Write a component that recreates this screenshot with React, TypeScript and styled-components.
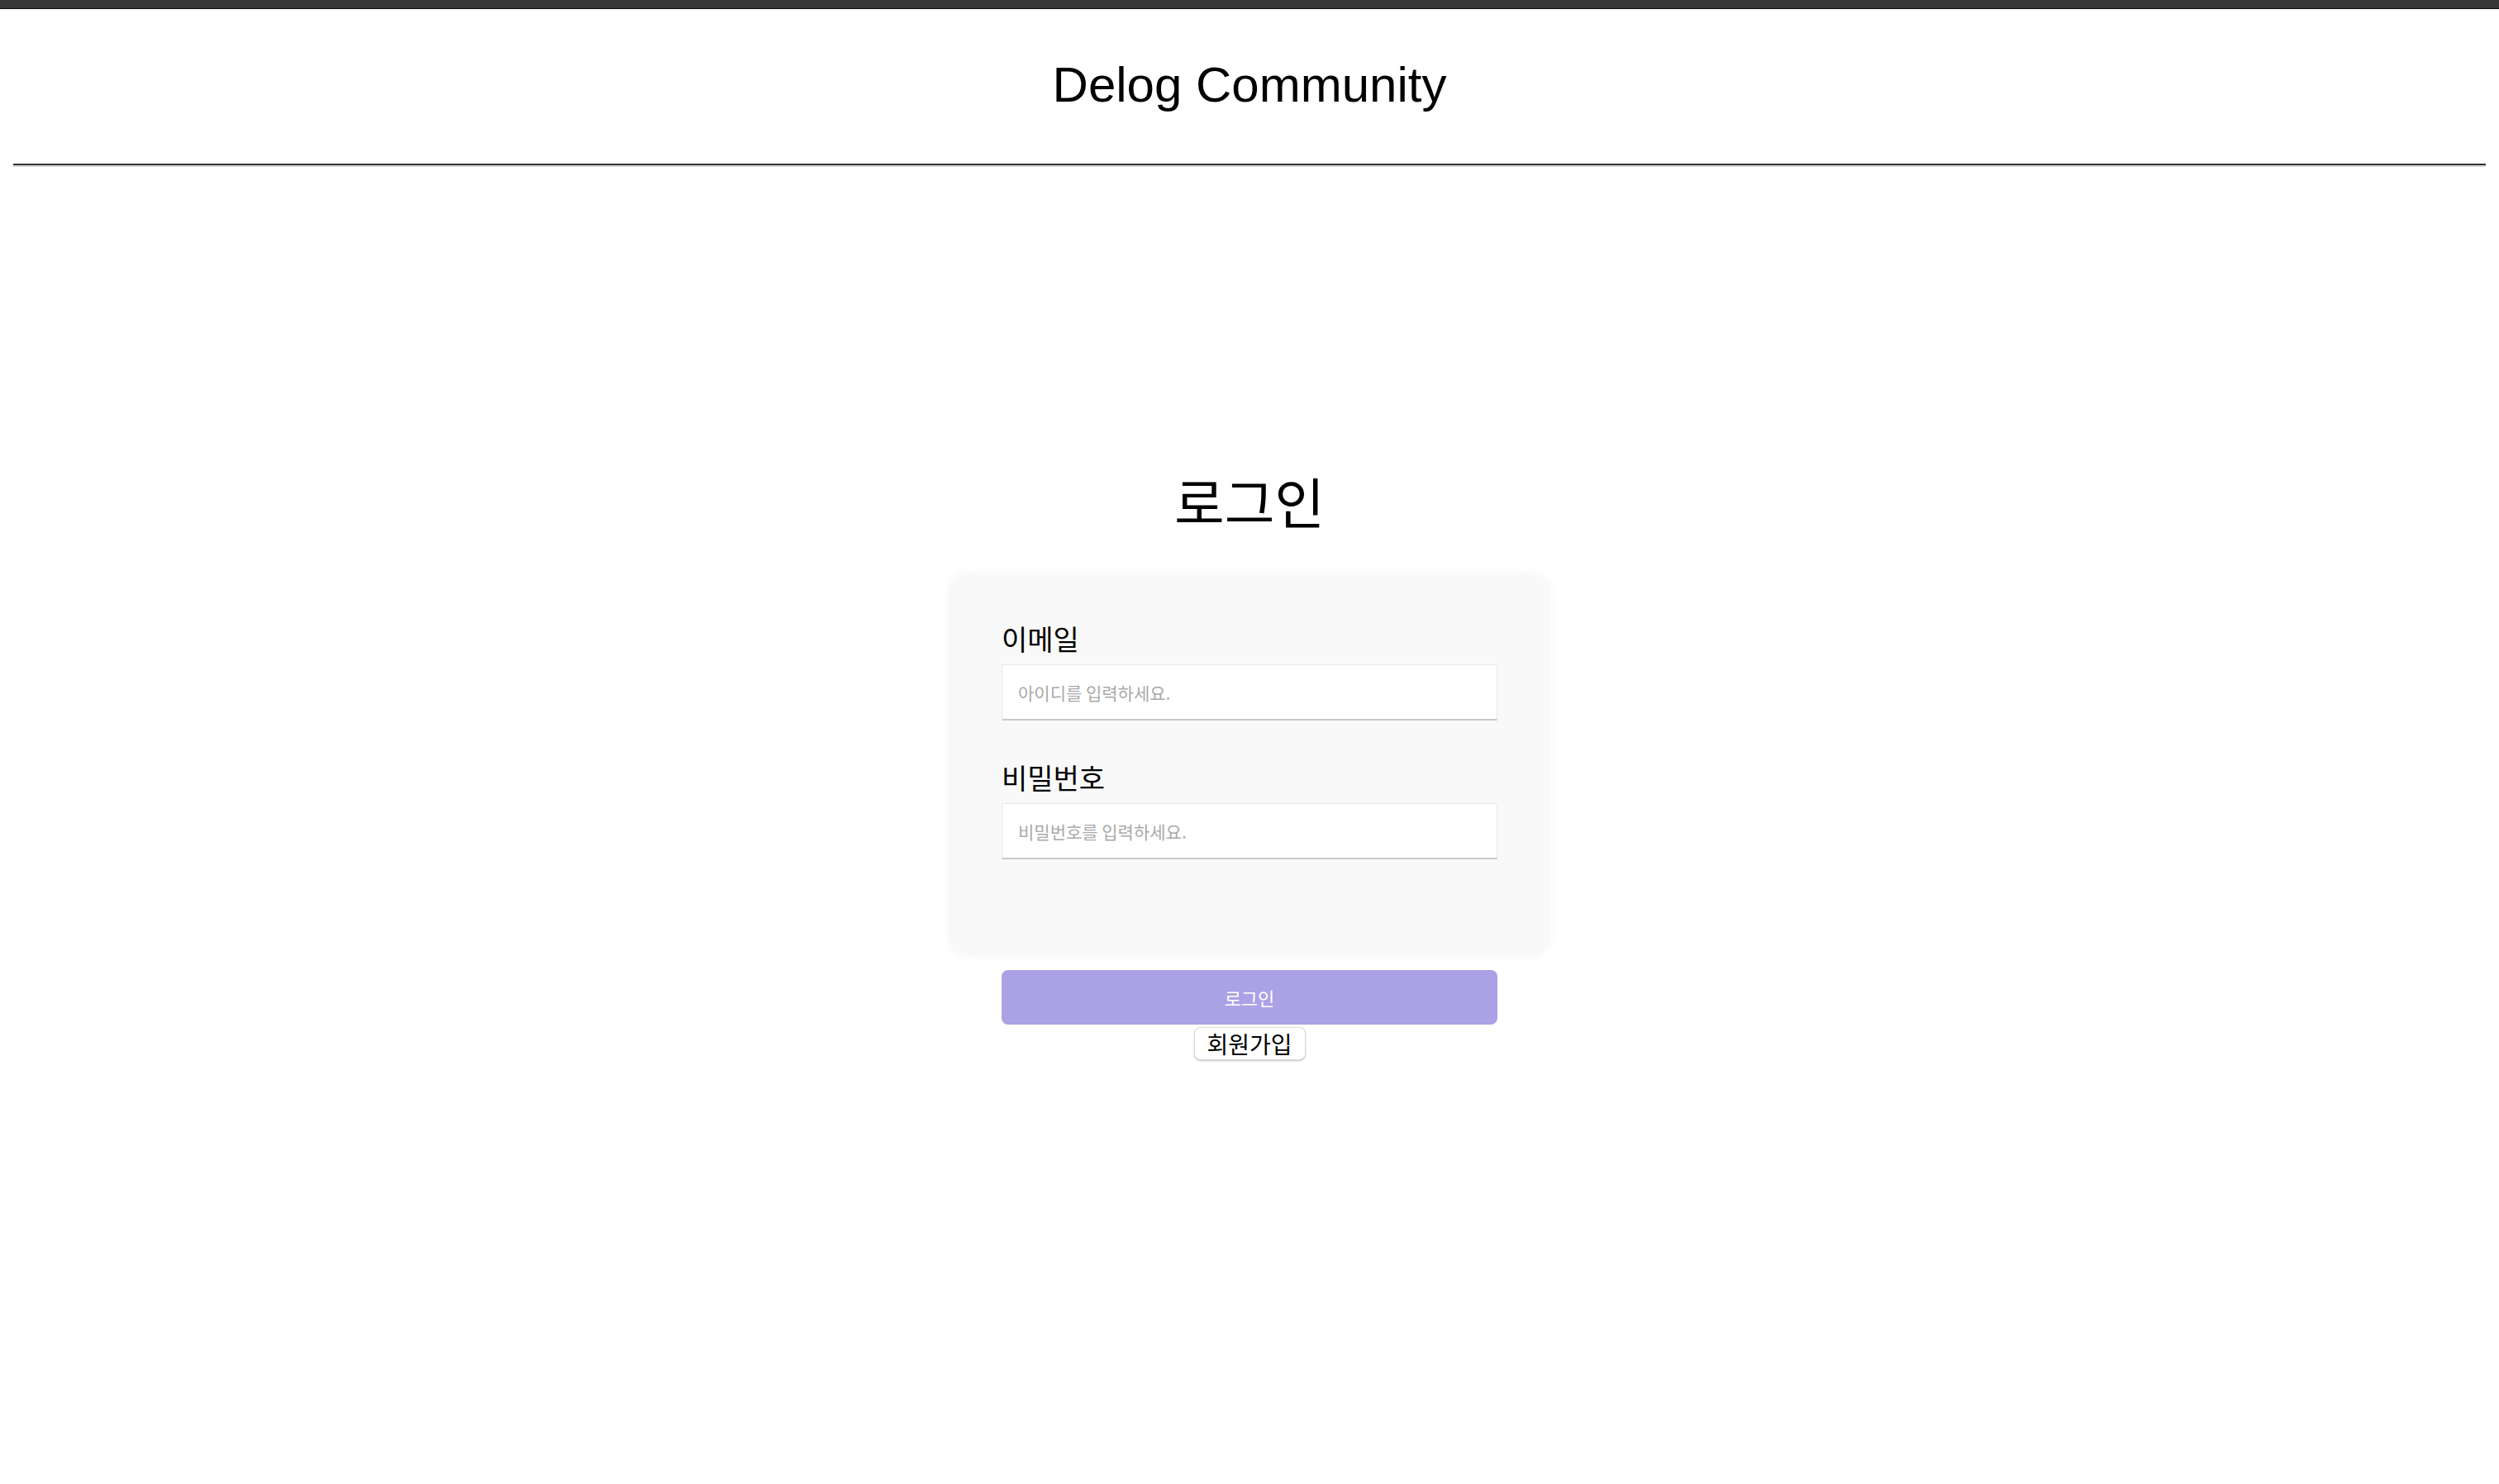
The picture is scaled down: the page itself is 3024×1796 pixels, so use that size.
import React from "react";
import styled, { createGlobalStyle } from "styled-components";

const GlobalStyle = createGlobalStyle`
  html, body {
    margin: 0;
    padding: 0;
    background: #ffffff;
  }
  body {
    font-family: "Noto Sans CJK KR", "Noto Sans", sans-serif;
    color: #000;
  }
  * { box-sizing: border-box; }
`;

const Page = styled.div`
  display: flex;
  flex-direction: column;
  min-height: 1796px;
`;

const TopBar = styled.div`
  height: 11px;
  background: #363636;
  border-bottom: 1px solid #111111;
`;

const Header = styled.header`
  display: flex;
  justify-content: center;
  margin-top: 57px;
`;

const SiteTitle = styled.h1`
  margin: 0;
  font-family: "Liberation Sans", Arial, sans-serif;
  font-weight: 400;
  font-size: 60px;
  line-height: 70px;
  color: #000;
`;

const Divider = styled.hr`
  height: 0;
  margin: 60px 16px 0;
  border: none;
  border-top: 2px solid #333333;
  border-bottom: 2px solid #d4d4d4;
`;

const Main = styled.main`
  display: flex;
  flex-direction: column;
  align-items: center;
  padding-top: 365px;
`;

const PageTitle = styled.h2`
  margin: 0;
  font-family: "Noto Sans CJK KR", sans-serif;
  font-weight: 400;
  font-size: 66px;
  line-height: 76px;
  color: #000;
`;

const Card = styled.form`
  width: 720px;
  margin-top: 55px;
  padding: 57px 60px 113px;
  background: #f9f9f9;
  border-radius: 18px;
  box-shadow: 0 0 16px rgba(0, 0, 0, 0.07);
  display: flex;
  flex-direction: column;
  gap: 51px;
`;

const Field = styled.div`
  display: flex;
  flex-direction: column;
  gap: 13px;
`;

const Label = styled.label`
  font-family: "Noto Sans CJK KR", sans-serif;
  font-size: 34px;
  line-height: 36px;
  color: #000;
`;

const TextInput = styled.input`
  width: 600px;
  height: 68px;
  padding: 0 19px;
  background: #ffffff;
  border: 1px solid #e8e8e8;
  border-bottom: 2px solid #c9c9c9;
  border-radius: 0;
  outline: none;
  font-family: "Noto Sans CJK KR", sans-serif;
  font-size: 21px;
  color: #222;
  &::placeholder {
    color: #a9a9a9;
  }
`;

const PrimaryButton = styled.button`
  width: 600px;
  height: 66px;
  margin-top: 21px;
  border: none;
  border-radius: 8px;
  background: #aba1e5;
  color: #ffffff;
  font-family: "Noto Sans CJK KR", sans-serif;
  font-size: 22px;
  cursor: pointer;
`;

const SecondaryButton = styled.button`
  width: 135px;
  height: 40px;
  margin-top: 3px;
  padding: 0;
  background: #ffffff;
  border: 1px solid #dcdcdc;
  border-radius: 8px;
  box-shadow: 0 1px 2px rgba(0, 0, 0, 0.25);
  color: #000;
  font-family: "Noto Sans CJK KR", sans-serif;
  font-size: 28px;
  line-height: 38px;
  cursor: pointer;
`;

export default function App() {
  return (
    <>
      <GlobalStyle />
      <Page>
        <TopBar />
        <Header>
          <SiteTitle>Delog Community</SiteTitle>
        </Header>
        <Divider />
        <Main>
          <PageTitle>로그인</PageTitle>
          <Card onSubmit={(e) => e.preventDefault()}>
            <Field>
              <Label htmlFor="email">이메일</Label>
              <TextInput id="email" type="text" placeholder="아이디를 입력하세요." />
            </Field>
            <Field>
              <Label htmlFor="password">비밀번호</Label>
              <TextInput id="password" type="password" placeholder="비밀번호를 입력하세요." />
            </Field>
          </Card>
          <PrimaryButton type="button">로그인</PrimaryButton>
          <SecondaryButton type="button">회원가입</SecondaryButton>
        </Main>
      </Page>
    </>
  );
}
